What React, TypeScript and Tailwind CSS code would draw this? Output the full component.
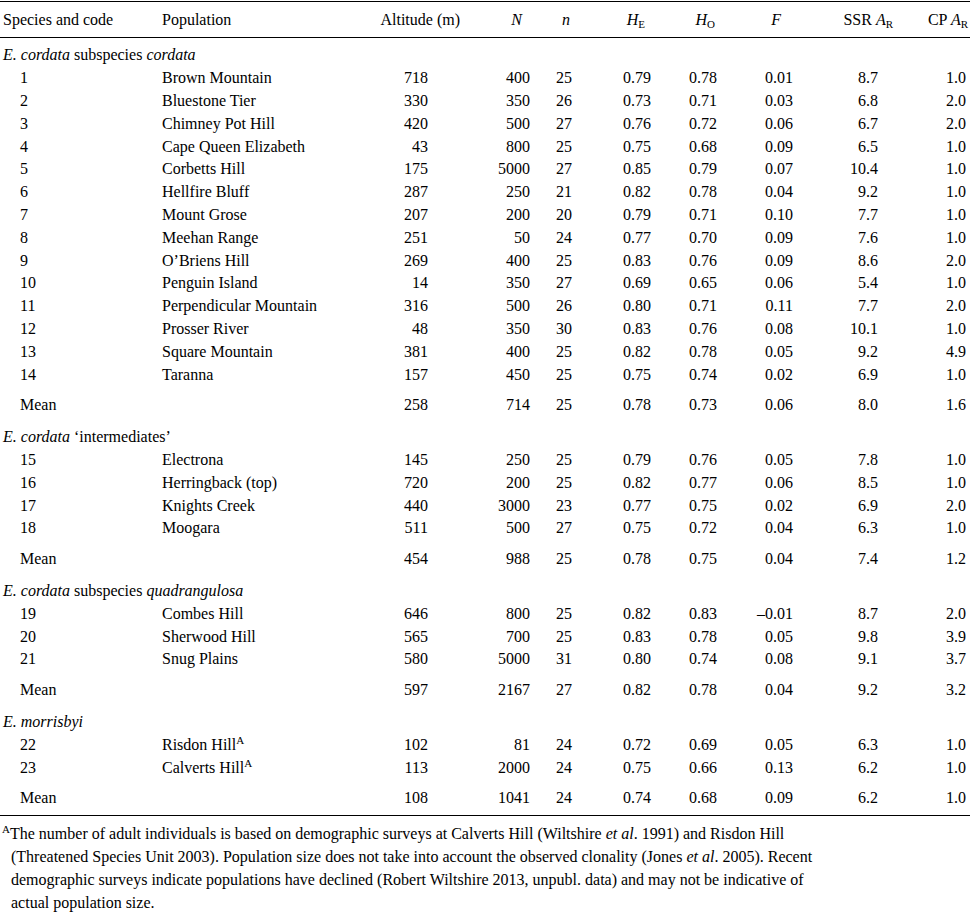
import React from 'react';

type Row = [string, React.ReactNode, string, string, string, string, string, string, string, string];

const cols = 'grid grid-cols-[162px_208px_90px_80px_50px_70px_70px_80px_95px_65px]';

const Sup = ({ children }: { children: React.ReactNode }) => (
  <span className="relative -top-[6px] align-baseline text-[11px] leading-none">{children}</span>
);

const Sub = ({ children }: { children: React.ReactNode }) => (
  <span className="relative top-[3px] align-baseline text-[11px] not-italic leading-none">{children}</span>
);

const groups: { title: React.ReactNode; rows: Row[]; mean: string[] }[] = [
  {
    title: (
      <>
        <i>E. cordata</i> subspecies <i>cordata</i>
      </>
    ),
    rows: [
      ['1', 'Brown Mountain', '718', '400', '25', '0.79', '0.78', '0.01', '8.7', '1.0'],
      ['2', 'Bluestone Tier', '330', '350', '26', '0.73', '0.71', '0.03', '6.8', '2.0'],
      ['3', 'Chimney Pot Hill', '420', '500', '27', '0.76', '0.72', '0.06', '6.7', '2.0'],
      ['4', 'Cape Queen Elizabeth', '43', '800', '25', '0.75', '0.68', '0.09', '6.5', '1.0'],
      ['5', 'Corbetts Hill', '175', '5000', '27', '0.85', '0.79', '0.07', '10.4', '1.0'],
      ['6', 'Hellfire Bluff', '287', '250', '21', '0.82', '0.78', '0.04', '9.2', '1.0'],
      ['7', 'Mount Grose', '207', '200', '20', '0.79', '0.71', '0.10', '7.7', '1.0'],
      ['8', 'Meehan Range', '251', '50', '24', '0.77', '0.70', '0.09', '7.6', '1.0'],
      ['9', 'O’Briens Hill', '269', '400', '25', '0.83', '0.76', '0.09', '8.6', '2.0'],
      ['10', 'Penguin Island', '14', '350', '27', '0.69', '0.65', '0.06', '5.4', '1.0'],
      ['11', 'Perpendicular Mountain', '316', '500', '26', '0.80', '0.71', '0.11', '7.7', '2.0'],
      ['12', 'Prosser River', '48', '350', '30', '0.83', '0.76', '0.08', '10.1', '1.0'],
      ['13', 'Square Mountain', '381', '400', '25', '0.82', '0.78', '0.05', '9.2', '4.9'],
      ['14', 'Taranna', '157', '450', '25', '0.75', '0.74', '0.02', '6.9', '1.0'],
    ],
    mean: ['258', '714', '25', '0.78', '0.73', '0.06', '8.0', '1.6'],
  },
  {
    title: (
      <>
        <i>E. cordata</i> ‘intermediates’
      </>
    ),
    rows: [
      ['15', 'Electrona', '145', '250', '25', '0.79', '0.76', '0.05', '7.8', '1.0'],
      ['16', 'Herringback (top)', '720', '200', '25', '0.82', '0.77', '0.06', '8.5', '1.0'],
      ['17', 'Knights Creek', '440', '3000', '23', '0.77', '0.75', '0.02', '6.9', '2.0'],
      ['18', 'Moogara', '511', '500', '27', '0.75', '0.72', '0.04', '6.3', '1.0'],
    ],
    mean: ['454', '988', '25', '0.78', '0.75', '0.04', '7.4', '1.2'],
  },
  {
    title: (
      <>
        <i>E. cordata</i> subspecies <i>quadrangulosa</i>
      </>
    ),
    rows: [
      ['19', 'Combes Hill', '646', '800', '25', '0.82', '0.83', '–0.01', '8.7', '2.0'],
      ['20', 'Sherwood Hill', '565', '700', '25', '0.83', '0.78', '0.05', '9.8', '3.9'],
      ['21', 'Snug Plains', '580', '5000', '31', '0.80', '0.74', '0.08', '9.1', '3.7'],
    ],
    mean: ['597', '2167', '27', '0.82', '0.78', '0.04', '9.2', '3.2'],
  },
  {
    title: <i>E. morrisbyi</i>,
    rows: [
      ['22', <>Risdon Hill<Sup>A</Sup></>, '102', '81', '24', '0.72', '0.69', '0.05', '6.3', '1.0'],
      ['23', <>Calverts Hill<Sup>A</Sup></>, '113', '2000', '24', '0.75', '0.66', '0.13', '6.2', '1.0'],
    ],
    mean: ['108', '1041', '24', '0.74', '0.68', '0.09', '6.2', '1.0'],
  },
];

// right padding of each numeric column, so the digits line up as in the print
const numPad = ['pr-[32px]', 'pr-[10px]', 'pr-[18px]', 'pr-[9px]', 'pr-[13px]', 'pr-[17px]', 'pr-[27px]', 'pr-[4px]'];

const DataRow = ({ code, pop, nums, className = '' }: { code: string; pop: React.ReactNode; nums: string[]; className?: string }) => (
  <div className={`${cols} h-[22.8px] items-center ${className}`}>
    <div className="pl-[20px]">{code}</div>
    <div>{pop}</div>
    {nums.map((v, i) => (
      <div key={i} className={`text-right ${numPad[i]}`}>
        {v}
      </div>
    ))}
  </div>
);

export default function App() {
  return (
    <div className="w-[970px] h-[913px] bg-white text-black text-[16px] leading-none font-['Liberation_Serif','Times_New_Roman',serif] overflow-hidden">
      <div className="border-t-[1.5px] border-black mt-[1px]" />
      <div className={`${cols} h-[36px] items-center border-b-[1.5px] border-black`}>
        <div className="pl-[3px]">Species and code</div>
        <div>Population</div>
        <div className="text-right">Altitude (m)</div>
        <div className="text-right pr-[18px] italic">N</div>
        <div className="text-right pr-[20px] italic">n</div>
        <div className="text-right pr-[15px]">
          <i>H</i>
          <Sub>E</Sub>
        </div>
        <div className="text-right pr-[15px]">
          <i>H</i>
          <Sub>O</Sub>
        </div>
        <div className="text-right pr-[29px] italic">F</div>
        <div className="text-right pr-[12px]">
          SSR <i>A</i>
          <Sub>R</Sub>
        </div>
        <div className="text-right pr-[2px]">
          CP <i>A</i>
          <Sub>R</Sub>
        </div>
      </div>

      <div className="pt-[6px]">
        {groups.map((g, gi) => (
          <div key={gi} className={gi > 0 ? 'mt-[9px]' : ''}>
            <div className="h-[22.8px] flex items-center pl-[3px]">
              <span>{g.title}</span>
            </div>
            {g.rows.map((r) => (
              <DataRow key={r[0]} code={r[0]} pop={r[1]} nums={r.slice(2) as string[]} />
            ))}
            <DataRow code="Mean" pop="" nums={g.mean} className="mt-[8px]" />
          </div>
        ))}
      </div>

      <div className="mt-[5px] border-t-[1.5px] border-black" />
      <p className="pt-[6px] pl-[11px] leading-[23px]">
        <span className="-ml-[9px]">
          <Sup>A</Sup>
        </span>
        The number of adult individuals is based on demographic surveys at Calverts Hill (Wiltshire <i>et al</i>. 1991) and Risdon Hill
        <br />
        (Threatened Species Unit 2003). Population size does not take into account the observed clonality (Jones <i>et al</i>. 2005). Recent
        <br />
        demographic surveys indicate populations have declined (Robert Wiltshire 2013, unpubl. data) and may not be indicative of
        <br />
        actual population size.
      </p>
    </div>
  );
}
